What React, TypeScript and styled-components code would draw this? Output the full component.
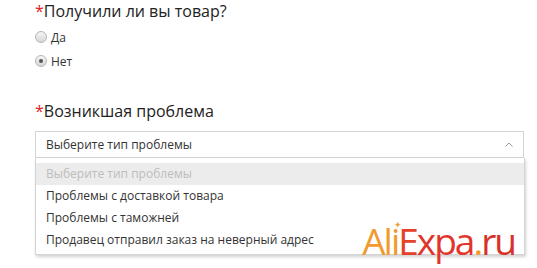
import React from "react";
import styled, { createGlobalStyle } from "styled-components";

const Global = createGlobalStyle`
  html, body { margin: 0; padding: 0; background: #fff; }
  body { font-family: "Open Sans", "Liberation Sans", sans-serif; color: #333; width: 537px; height: 268px; overflow: hidden; }
`;

const Page = styled.div`
  position: relative;
  width: 537px;
  height: 268px;
  padding: 0 0 0 35px;
  box-sizing: border-box;
`;

const Question = styled.div<{ $top: number }>`
  font-size: 16px;
  line-height: 22px;
  color: #222;
  margin-top: ${(p) => p.$top}px;
`;

const Star = styled.span`
  color: #e02020;
`;

const RadioGroup = styled.div`
  display: flex;
  flex-direction: column;
  gap: 8px;
  margin-top: 7px;
`;

const RadioRow = styled.label`
  display: flex;
  align-items: center;
  gap: 4px;
  height: 16px;
  font-size: 12px;
  color: #333;
`;

const RadioCircle = styled.span<{ $checked?: boolean }>`
  width: 10px;
  height: 10px;
  border-radius: 50%;
  border: 1px solid #b5b5b5;
  background: linear-gradient(#f6f6f6, #d6d6d6);
  display: flex;
  align-items: center;
  justify-content: center;
  &::after {
    content: "";
    width: 4px;
    height: 4px;
    border-radius: 50%;
    background: ${(p) => (p.$checked ? "#555" : "transparent")};
  }
`;

const SelectWrap = styled.div`
  position: relative;
  width: 489px;
  margin-top: 9px;
`;

const SelectBox = styled.div`
  height: 27px;
  box-sizing: border-box;
  border: 1px solid #d4d4d4;
  display: flex;
  align-items: center;
  justify-content: space-between;
  padding: 0 10px 0 10px;
  font-size: 12px;
  color: #333;
`;

const Chevron = styled.svg`
  width: 8px;
  height: 5px;
`;

const Menu = styled.ul`
  position: absolute;
  left: 0;
  top: 27px;
  width: 490px;
  margin: 0;
  padding: 5px 0 3px;
  list-style: none;
  background: #fff;
  border: 1px solid #d4d4d4;
  border-top: none;
  box-sizing: border-box;
  box-shadow: 1px 2px 3px rgba(0, 0, 0, 0.18);
`;

const Option = styled.li<{ $placeholder?: boolean }>`
  height: 22px;
  line-height: 22px;
  padding: 0 10px;
  font-size: 12px;
  color: ${(p) => (p.$placeholder ? "#bdbdbd" : "#333")};
  background: ${(p) => (p.$placeholder ? "#ececec" : "transparent")};
`;

const Logo = styled.div`
  position: absolute;
  right: 22px;
  top: 222px;
  font-family: "Open Sans", "Liberation Sans", sans-serif;
  font-size: 37px;
  letter-spacing: -2px;
  line-height: 37px;
  white-space: nowrap;
`;

const Part = styled.span<{ $c: string }>`
  color: ${(p) => p.$c};
`;

const Sparkle = styled.span`
  position: relative;
  display: inline-block;
  &::before {
    content: "✦";
    position: absolute;
    font-family: "DejaVu Sans", sans-serif;
    font-size: 9px;
    line-height: 9px;
    left: 3px;
    top: -1px;
    color: #f0a030;
  }
`;

export default function App() {
  return (
    <>
      <Global />
      <Page>
        <Question $top={0}>
          <Star>*</Star>Получили ли вы товар?
        </Question>
        <RadioGroup>
          <RadioRow>
            <RadioCircle />
            Да
          </RadioRow>
          <RadioRow>
            <RadioCircle $checked />
            Нет
          </RadioRow>
        </RadioGroup>
        <Question $top={31}>
          <Star>*</Star>Возникшая проблема
        </Question>
        <SelectWrap>
          <SelectBox>
            <span>Выберите тип проблемы</span>
            <Chevron viewBox="0 0 8 5">
              <path d="M0.5 4.5 L4 1 L7.5 4.5" fill="none" stroke="#999" strokeWidth="1" />
            </Chevron>
          </SelectBox>
          <Menu>
            <Option $placeholder>Выберите тип проблемы</Option>
            <Option>Проблемы с доставкой товара</Option>
            <Option>Проблемы с таможней</Option>
            <Option>Продавец отправил заказ на неверный адрес</Option>
          </Menu>
        </SelectWrap>
        <Logo>
          <Part $c="#f29a2e">Al</Part>
          <Sparkle>
            <Part $c="#f29a2e">i</Part>
          </Sparkle>
          <Part $c="#e4432a">E</Part>
          <Part $c="#e2342a">xpa</Part>
          <Part $c="#f29a2e">.</Part>
          <Part $c="#d8302a">ru</Part>
        </Logo>
      </Page>
    </>
  );
}
